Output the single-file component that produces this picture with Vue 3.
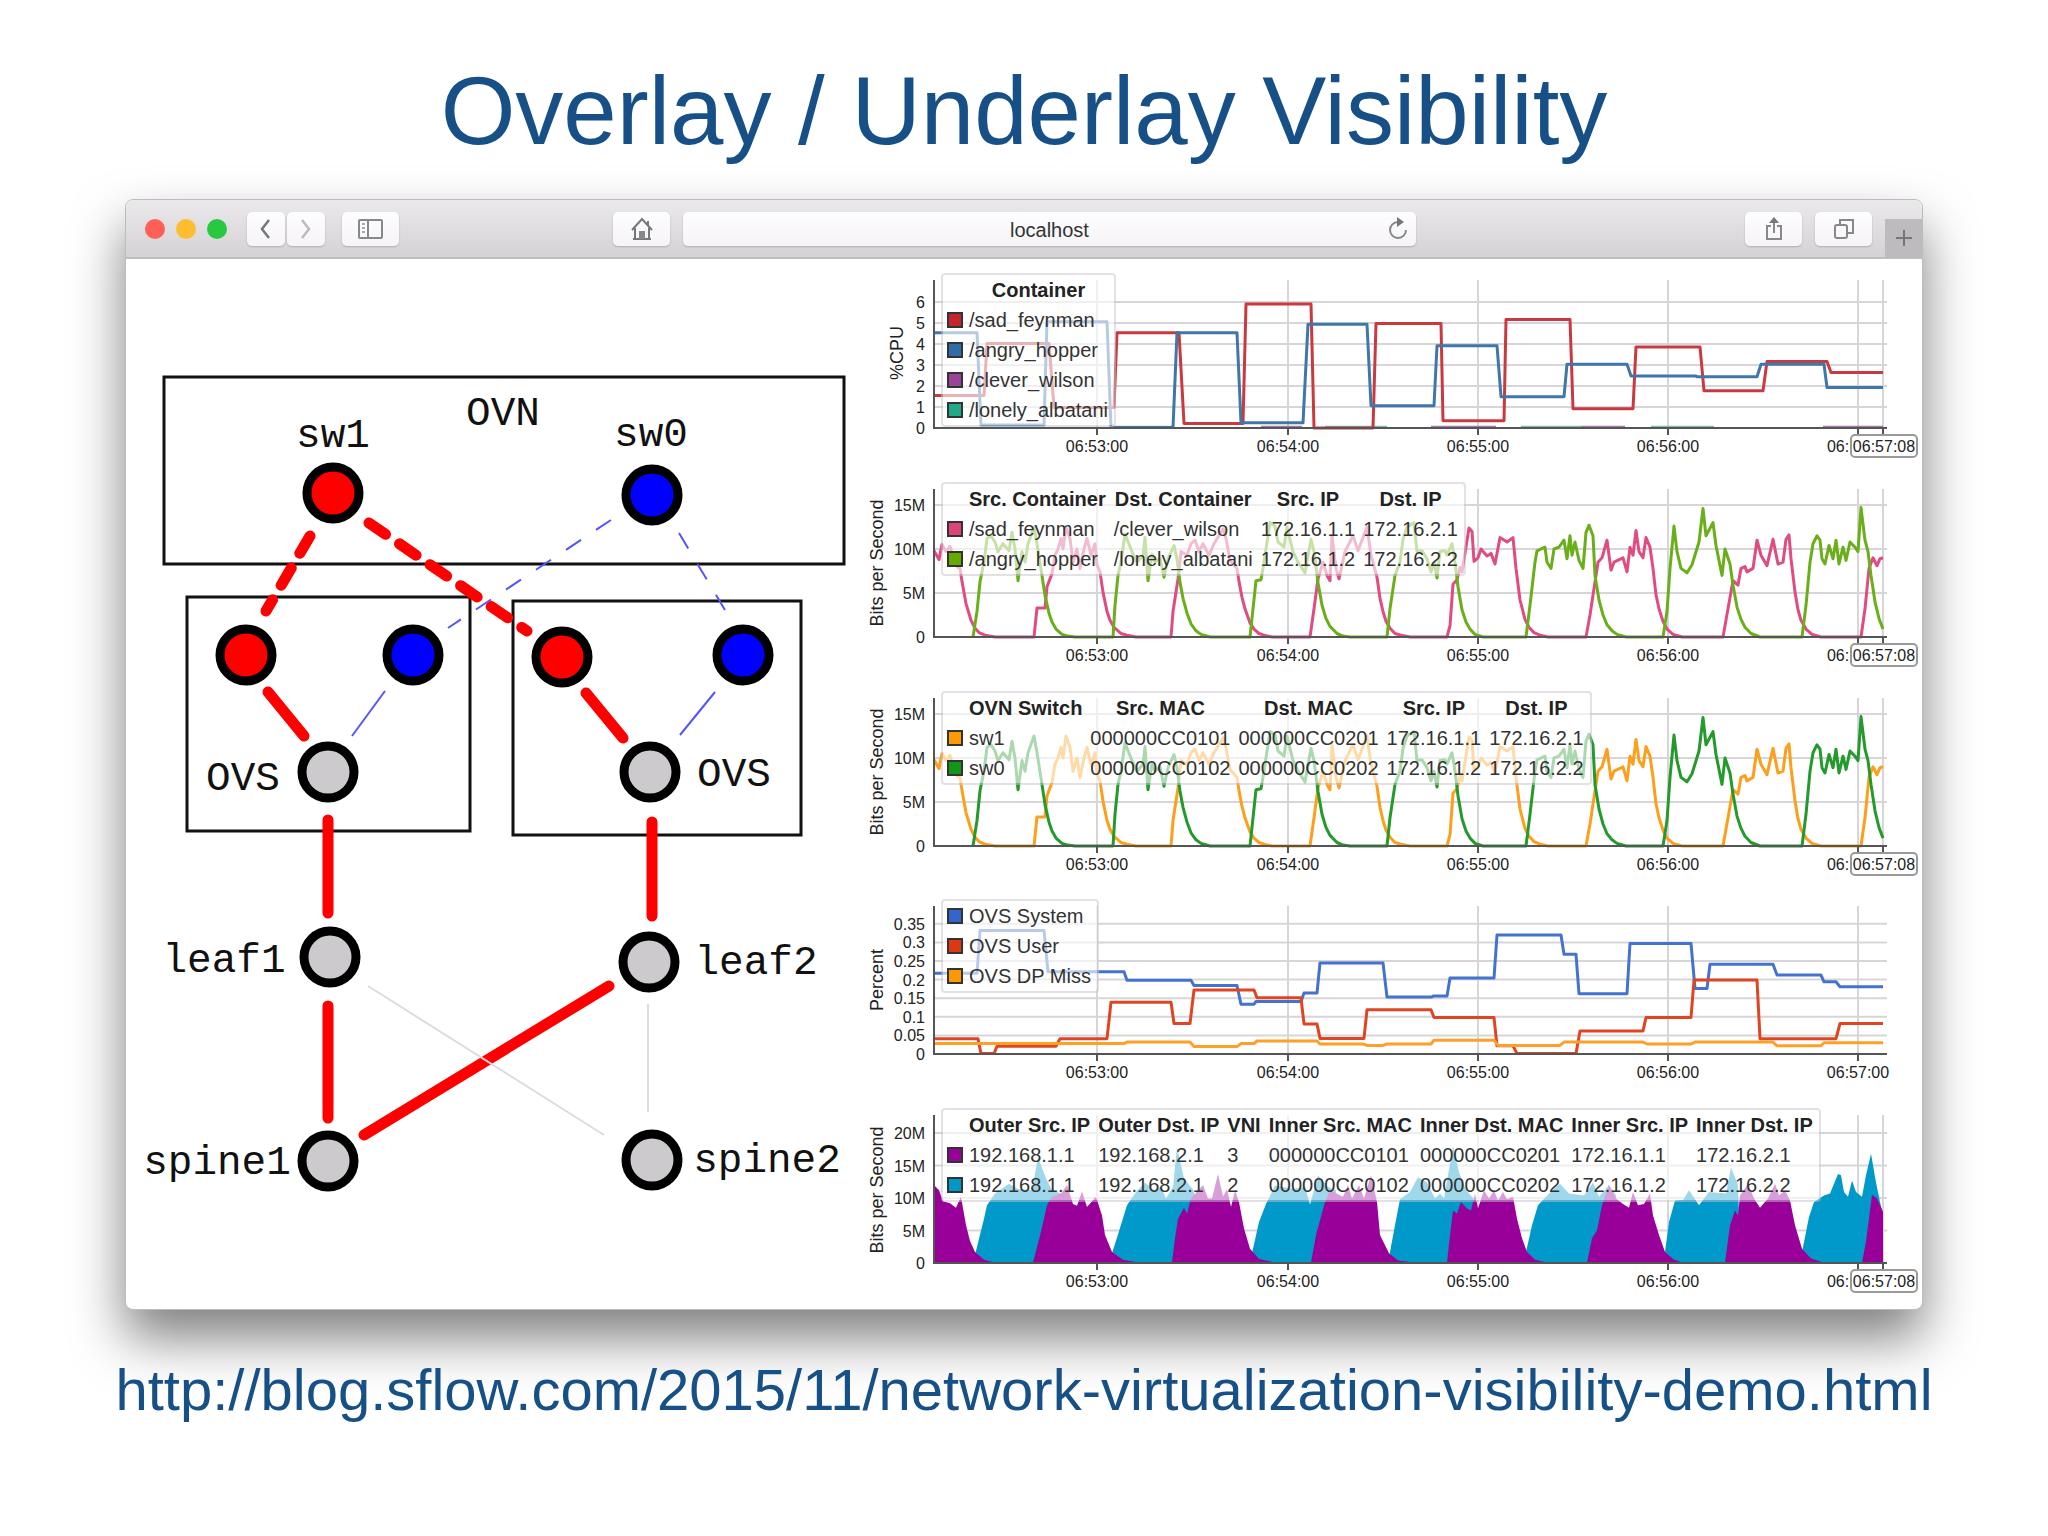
<template>
  <main class="slide">
    <h1 class="title">Overlay / Underlay Visibility</h1>

    <section class="window">
      <header class="toolbar">
        <div class="lights">
          <span class="light red"></span>
          <span class="light yellow"></span>
          <span class="light green"></span>
        </div>
        <div class="nav">
          <button class="tool narrow" type="button" aria-label="Back">
            <svg width="14" height="22" viewBox="0 0 14 22"><path d="M10 2 L3 11 L10 20" stroke="#777" stroke-width="2.5" /></svg>
          </button>
          <button class="tool narrow" type="button" aria-label="Forward">
            <svg width="14" height="22" viewBox="0 0 14 22"><path d="M3 2 L10 11 L3 20" stroke="#bbb" stroke-width="2.5" /></svg>
          </button>
        </div>
        <button class="tool" type="button" aria-label="Sidebar">
          <svg width="26" height="22" viewBox="0 0 26 22">
            <rect x="1" y="2" width="23" height="18" rx="1" stroke="#888" stroke-width="2" />
            <path d="M10 2 V20" stroke="#888" stroke-width="2" />
            <path d="M4 6 H7 M4 10 H7 M4 14 H7" stroke="#aaa" stroke-width="2" />
          </svg>
        </button>
        <div class="space-left"></div>
        <button class="tool home" type="button" aria-label="Home">
          <svg width="24" height="24" viewBox="0 0 24 24">
            <path d="M2 13 L12 2 L22 13 M18 8 V4 M5 11 V22 H19 V11 M3 22 H21" stroke="#777" stroke-width="2" />
            <rect x="9" y="14" width="6" height="8" fill="#888" />
          </svg>
        </button>
        <div class="address">
          <input type="text" value="localhost" aria-label="Address" />
          <button class="reload" type="button" aria-label="Reload">
            <svg width="22" height="24" viewBox="0 0 22 24">
              <path d="M11 5 A8 8 0 1 0 19 13" stroke="#888" stroke-width="2" />
              <path d="M10 0 L17 5 L10 10 Z" fill="#777" />
            </svg>
          </button>
        </div>
        <div class="space-right"></div>
        <button class="tool share" type="button" aria-label="Share">
          <svg width="22" height="24" viewBox="0 0 22 24">
            <path d="M8 9 H4 V22 H18 V9 H14 M11 16 V3" stroke="#888" stroke-width="2" />
            <path d="M6 6 L11 0 L16 6 Z" fill="#777" />
          </svg>
        </button>
        <button class="tool tabs" type="button" aria-label="Tabs">
          <svg width="22" height="22" viewBox="0 0 22 22">
            <rect x="2" y="7" width="12" height="13" rx="2" stroke="#888" stroke-width="2" />
            <path d="M7 7 V2 H20 V15 H15" stroke="#888" stroke-width="2" />
          </svg>
        </button>
        <button class="new-tab" type="button" aria-label="New tab">
          <svg width="20" height="20" viewBox="0 0 20 20"><path d="M10 2 V18 M2 10 H18" stroke="#777" stroke-width="2" /></svg>
        </button>
      </header>

      <div class="page">
        <svg class="topology" viewBox="0 0 734 1049">
          <g class="boxes">
            <rect x="38" y="117" width="680" height="187" />
            <rect x="61" y="337" width="283" height="234" />
            <rect x="387" y="341" width="288" height="234" />
          </g>
          <line
            v-for="(l, i) in links"
            :key="i"
            :class="l.kind"
            :x1="l.at[0]"
            :y1="l.at[1]"
            :x2="l.at[2]"
            :y2="l.at[3]"
          />
          <circle v-for="(n, i) in nodes" :key="i" :cx="n[0]" :cy="n[1]" r="26" :fill="n[2]" />
          <text v-for="(t, i) in labels" :key="i" :x="t[0]" :y="t[1]">{{ t[2] }}</text>
        </svg>

        <div class="charts">
          <figure v-for="(c, i) in charts" :key="i" class="chart">
            <svg viewBox="0 0 1062 208">
              <g class="grid">
                <line v-for="t in c.ticks.slice(1)" :key="t" x1="74" x2="1027" :y1="py(c, t)" :y2="py(c, t)" />
                <line v-for="t in times" :key="t.x" :x1="t.x" :x2="t.x" y1="16" :y2="BASE" />
                <line v-if="c.cursor" x1="1023" x2="1023" y1="16" :y2="BASE" />
              </g>
              <template v-for="(s, j) in c.series" :key="j">
                <polygon v-if="c.area" :points="areaPoints(c, s.data)" :fill="s.color" />
                <polyline v-else :points="linePoints(c, s.data)" :stroke="s.color" />
              </template>
              <path class="axis" d="M74 16 V164 H1027" />
              <path class="axis" d="M237 164 v7 M428 164 v7 M618 164 v7 M808 164 v7 M998 164 v7" />
              <path v-if="c.cursor" class="axis" d="M1023 164 v7" />
              <g class="y-labels">
                <text v-for="t in c.ticks" :key="t" x="65" :y="py(c, t) + 6">{{ t === 0 ? '0' : t + c.suffix }}</text>
              </g>
              <g class="x-labels">
                <text v-for="t in times.slice(0, 4)" :key="t.x" :x="t.x" y="188">{{ t.label }}</text>
                <text v-if="!c.cursor" :x="times[4].x" y="188">{{ times[4].label }}</text>
              </g>
              <text class="y-title" :x="-c.titleAt" :y="c.titleX" transform="rotate(-90)">{{ c.title }}</text>
              <!-- the cursor box hides the rest of the last time label -->
              <g v-if="c.cursor" class="cursor">
                <text x="978" y="188">{{ times[4].label.slice(0, 3) }}</text>
                <rect x="991" y="171" width="66" height="22" rx="4" />
                <text x="1024" y="188">06:57:08</text>
              </g>
            </svg>
            <table class="legend">
              <thead v-if="c.head">
                <tr>
                  <td></td>
                  <th v-for="h in c.head" :key="h" scope="col">{{ h }}</th>
                </tr>
              </thead>
              <tbody>
                <tr v-for="(r, k) in c.rows" :key="k">
                  <td class="key"><span class="swatch" :style="{ background: r[0] }"></span></td>
                  <td v-for="(v, m) in r.slice(1)" :key="m">{{ v }}</td>
                </tr>
              </tbody>
            </table>
          </figure>
        </div>
      </div>
    </section>

    <a class="link" href="http://blog.sflow.com/2015/11/network-virtualization-visibility-demo.html">http://blog.sflow.com/2015/11/network-virtualization-visibility-demo.html</a>
  </main>
</template>

<script setup>
const BASE = 164

const nodes = [
  [207, 233, '#ff0000'],
  [526, 235, '#0000ff'],
  [120, 395, '#ff0000'],
  [287, 395, '#0000ff'],
  [436, 397, '#ff0000'],
  [617, 395, '#0000ff'],
  [202, 512, '#cccacc'],
  [524, 512, '#cccacc'],
  [204, 697, '#cccacc'],
  [523, 702, '#cccacc'],
  [202, 901, '#cccacc'],
  [526, 900, '#cccacc']
]

const links = [
  { kind: 'hot', at: [142, 432, 178, 476] },
  { kind: 'hot', at: [460, 433, 497, 478] },
  { kind: 'hot', at: [202, 560, 202, 653] },
  { kind: 'hot', at: [526, 562, 526, 656] },
  { kind: 'hot', at: [202, 746, 202, 858] },
  { kind: 'hot', at: [238, 875, 483, 726] },
  { kind: 'hot dashed', at: [184, 276, 140, 351] },
  { kind: 'hot dashed', at: [243, 263, 401, 371] },
  { kind: 'cold dashed', at: [485, 260, 322, 368] },
  { kind: 'cold dashed', at: [553, 273, 599, 350] },
  { kind: 'cold', at: [259, 431, 226, 476] },
  { kind: 'cold', at: [589, 432, 554, 475] },
  { kind: 'idle', at: [242, 726, 478, 875] },
  { kind: 'idle', at: [522, 744, 522, 852] }
]

const labels = [
  [377, 165, 'OVN'],
  [207, 187, 'sw1'],
  [525, 186, 'sw0'],
  [117, 530, 'OVS'],
  [608, 526, 'OVS'],
  [98, 712, 'leaf1'],
  [630, 714, 'leaf2'],
  [91, 914, 'spine1'],
  [641, 912, 'spine2']
]

const times = [
  { x: 237, label: '06:53:00' },
  { x: 428, label: '06:54:00' },
  { x: 618, label: '06:55:00' },
  { x: 808, label: '06:56:00' },
  { x: 998, label: '06:57:00' }
]

// "x,value x,value ..."
const parse = (text) => text.trim().split(/\s+/).map((p) => p.split(',').map(Number))

// "from,to,value ..." - a flat run per sample
const steps = (text) => parse(text).flatMap(([a, b, v]) => [[a, v], [b, v]])

const py = (c, v) => Math.round((BASE - v * c.unit) * 10) / 10
const linePoints = (c, data) => data.map(([x, v]) => x + ',' + py(c, v)).join(' ')
const areaPoints = (c, data) =>
  data[0][0] + ',' + BASE + ' ' + linePoints(c, data) + ' ' + data[data.length - 1][0] + ',' + BASE

const flow1 = parse(`
  74,9.8 79,8.8 82,10.5 86,9.7 90,10.3 94,8.8 97,8 100,7.8 102,6.3 106,3.8 111,1.9 115,1 119,.5 125,.2 135,0
  174,0 177,3.3 185,3.3 187,5.7 192,7.2 195,9.3 198,10 201,11.2 203,10 206,12.5 210,11.2 213,8.5 217,10
  220,7.8 224,10 227,11.2 231,9.3 235,10.6 237,8.2 240,7.4 243,5.1 247,2.9 250,1.9 254,1.1 261,.4 267,.2 276,0
  311,0 313,2.9 318,6.6 321,9.7 327,9.3 331,10.6 335,11 339,9.7 343,10.6 349,9.3 354,10.6 363,12.3 366,11.2
  370,8.7 377,7.8 379,6.3 382,4.5 385,3.2 390,1.6 394,.9 399,.4 404,.2 412,0
  450,0 454,3.2 458,6.6 463,8.5 467,7 470,6.4 472,11.5 476,7.8 479,6.6 485,9.7 493,11.5 498,9.8 507,12.5
  511,9.3 517,6.8 520,4.4 523,2.9 526,1.8 530,1 535,.4 541,.2 550,0
  587,0 590,1.3 593,6 597,6.5 600,7.9 602,7.4 609,12.4 612,12 614,8.6 618,9 621,10 627,9.2 631,9.5 635,8.3
  640,11.3 647,10.8 653,11.3 656,7.8 660,4.2 665,2 669,1.1 674,.5 680,.2 688,0
  726,0 730,2.5 734,5.5 738,8.5 742,9 747,11 751,7.6 754,8.5 763,9 767,7.4 770,10.2 773,9.3 776,12.1 779,9.7
  783,9 786,11.3 790,10.2 793,7.8 796,4.8 799,3.2 803,1.8 807,.9 813,.3 822,0
  863,0 868,3.2 873,6.4 878,5.9 881,7.8 885,8 887,7.4 893,7.8 897,11 901,9.3 907,8.1 913,11.1 918,8.3
  923,8.5 926,11.1 929,11.6 931,8.9 935,5.1 938,3.1 941,1.9 946,.9 952,.3 961,0
  1001,0 1005,3.2 1009,7.8 1013,9 1017,8.1 1020,8.9 1023,9`)

const flow2 = parse(`
  113,0 117,2.9 120,6.3 124,8.5 127,11.2 131,11.5 135,10.8 138,9.7 143,10.6 149,9.8 152,11.9 155,10 158,6.4
  162,9.7 165,8.5 168,10.6 174,12.5 177,10.6 182,7 185,4.7 189,2.7 192,1.7 196,.9 202,.3 208,.1 215,0
  253,0 255,3.6 258,7 261,8.5 265,11.7 272,9.7 277,8.5 283,9.3 285,11.3 288,6.4 292,9.4 295,8.5 300,9
  304,6.8 308,8.9 314,10.4 317,8.9 320,6.2 323,4.4 327,2.7 331,1.5 336,.7 341,.3 350,0
  390,0 393,3.2 396,6.4 401,6.5 404,8.5 410,13 415,12.6 418,10.8 424,10.2 427,12.5 433,9.7 438,8.5 445,7.3
  451,11.1 454,9.7 458,6.2 462,3.6 466,2.1 470,1.2 477,.4 483,.1 490,0
  527,0 530,3.2 535,7 540,8.5 543,11.1 547,12.5 554,13 557,9.7 562,9.8 567,8.9 571,7.4 574,8.5 577,6.7
  580,9.7 585,9.8 587,9.3 592,10.6 595,8.5 598,5.7 602,3.1 606,1.7 610,.9 615,.3 623,0
  666,0 670,3.6 675,8.5 677,9.8 685,10.2 687,8.5 691,7.8 694,10 699,10.2 704,11 707,8.9 710,11.5 712,9.3
  715,10.8 719,8.7 723,7.8 726,11.9 729,12.7 733,11.5 735,7 739,4.2 743,2.5 747,1.4 752,.7 757,.3 766,0
  803,0 807,2.9 810,7.8 814,12.6 817,9.7 821,7.8 827,7.3 832,8.2 839,10.8 843,14.6 846,11.5 853,13 856,10.4
  862,7 865,10 870,8.3 873,5.9 877,3.4 881,2 885,1.1 891,.4 900,0
  942,0 946,3.6 950,8.5 953,10.6 957,11.5 960,11 962,8.9 965,8.3 969,10.4 973,8.9 976,11 979,8.3 983,10.2
  986,8.7 990,10.8 995,10.2 998,9.7 1001,14.7 1005,11 1008,9.7 1011,7 1015,4 1019,2.1 1023,.9`)

const tunnel2 = parse(`
  113,0 117,2.5 124,6.8 127,8.9 135,10.7 149,12.2 158,11.4 165,11.3 172,11.2 178,16.3 186,13 192,11.2 201,10.7 203,0
  250,0 252,1.5 258,4.4 267,8.9 276,10.9 285,12.4 294,11.2 301,11.7 306,9.9 313,11.7 317,17.8 324,13 333,11.3 338,9 340,0
  390,0 392,1.5 399,6.3 406,9.1 415,11.9 433,11.4 445,11.7 450,9 458,13.5 468,11.7 476,11.2 480,0
  528,0 530,1.7 535,5.8 540,9.8 550,10.9 558,13.2 567,12.4 575,9.9 580,10.7 584,9.9 593,18 599,14 606,11.2
  613,10 617,8 620,0
  664,0 666,1.7 672,5.8 678,8.9 689,10.7 700,12.2 709,10.7 724,10.4 733,12.4 739,10.2 749,12 756,10.4 760,0
  803,0 805,1.7 809,6.3 815,9.6 823,9.7 829,11.2 839,8.9 849,10.9 866,10.7 871,14.7 878,12 879,7.6 881,0
  940,0 942,1.7 949,7.1 954,9.4 964,10.4 970,10.7 974,12.2 978,13.7 981,13.5 984,10.9 988,10.2 992,12.7
  996,10.9 1002,10.2 1006,13.5 1011,16.8 1016,12.4 1020,9.4 1023,7.3`)

const tunnel1 = parse(`
  74,12 79,11.2 83,9.5 90,9.2 96,8.5 101,10.2 106,5.8 110,3.4 115,1.7 124,.5 133,.15
  173,.1 181,4.8 187,8.9 192,10.2 201,10.7 207,12 213,9.1 217,8.8 222,11 227,8.6 236,10.2 242,7.3 245,4.3
  252,1.7 263,.5 276,.15
  312,.1 315,3.8 318,6.8 324,8.5 327,7.6 331,9.9 343,12 348,9.9 352,9.9 358,13.7 363,10.2 367,11.4 371,8.6
  375,11.2 379,9.4 384,5.3 390,2.2 399,.6 413,.15
  451,.1 456,4.3 465,9.4 470,11.2 483,10.2 488,12 492,9.9 499,12 504,9.9 511,13.5 517,9.4 520,4.3 529,1.5
  538,.4 550,.15
  587,.1 590,4.3 593,8.1 597,7.6 601,9.4 607,8.4 611,8.1 615,10.7 618,8.4 624,11.2 629,9.9 634,11.2 638,9.6
  643,10.9 647,9.8 653,10.2 657,6.8 662,3.8 667,1.7 675,.5 685,.15
  727,.1 732,3.8 737,5 742,8.9 749,12 756,9.9 763,9.1 769,8.5 773,10.9 778,8.9 784,9.1 790,10.7 793,7.3
  799,4.3 805,1.7 814,.5 821,.15
  865,.1 870,5.8 875,8.1 878,7.3 880,10.4 888,12.2 894,9.9 900,8.5 908,9.9 915,12.2 919,10.4 925,11.2
  930,9.6 935,5.8 942,2.2 951,.7 962,.15
  1002,.1 1006,3.3 1012,10.5 1017,9.9 1023,7.9`)

const charts = [
  {
    title: '%CPU',
    titleAt: 89,
    titleX: 43,
    unit: 21,
    ticks: [0, 1, 2, 3, 4, 5, 6],
    suffix: '',
    cursor: true,
    head: ['Container'],
    rows: [
      ['#c1272d', '/sad_feynman'],
      ['#2f6da8', '/angry_hopper'],
      ['#994499', '/clever_wilson'],
      ['#22aa88', '/lonely_albatani']
    ],
    series: [
      { color: '#7fbfa6', data: steps('254,313,.04') },
      { color: '#7fbfa6', data: steps('465,527,.04') },
      { color: '#7fbfa6', data: steps('661,721,.04') },
      { color: '#7fbfa6', data: steps('791,854,.04') },
      { color: '#a47ba6', data: steps('401,442,.04') },
      { color: '#a47ba6', data: steps('571,636,.04') },
      { color: '#a47ba6', data: steps('721,765,.04') },
      { color: '#a47ba6', data: steps('963,1023,.04') },
      {
        color: '#c93a40',
        data: steps(`74,124,1.55 127,189,4.03 194,254,.98 257,319,4.54 324,383,.22 386,451,5.9 454,513,0
          516,581,4.97 583,644,.35 646,710,5.17 713,773,.92 776,840,3.86 844,903,1.77 907,967,3.16 971,1023,2.64`)
      },
      {
        color: '#3f77ab',
        data: steps(`74,117,4.54 121,184,.15 187,247,5.06 251,313,.02 317,377,4.54 381,443,.25 448,507,4.94
          511,574,1.06 577,637,3.92 641,704,1.49 707,767,3.04 771,836,2.48 837,897,2.44 901,964,3.04 967,1023,1.93`)
      }
    ]
  },
  {
    title: 'Bits per Second',
    titleAt: 90,
    titleX: 23,
    unit: 8.8,
    ticks: [0, 5, 10, 15],
    suffix: 'M',
    cursor: true,
    head: ['Src. Container', 'Dst. Container', 'Src. IP', 'Dst. IP'],
    rows: [
      ['#dd4477', '/sad_feynman', '/clever_wilson', '172.16.1.1', '172.16.2.1'],
      ['#66aa00', '/angry_hopper', '/lonely_albatani', '172.16.1.2', '172.16.2.2']
    ],
    series: [
      { color: '#e04c80', data: flow1 },
      { color: '#6aaf1a', data: flow2 }
    ]
  },
  {
    title: 'Bits per Second',
    titleAt: 90,
    titleX: 23,
    unit: 8.8,
    ticks: [0, 5, 10, 15],
    suffix: 'M',
    cursor: true,
    head: ['OVN Switch', 'Src. MAC', 'Dst. MAC', 'Src. IP', 'Dst. IP'],
    rows: [
      ['#ff9900', 'sw1', '000000CC0101', '000000CC0201', '172.16.1.1', '172.16.2.1'],
      ['#109618', 'sw0', '000000CC0102', '000000CC0202', '172.16.1.2', '172.16.2.2']
    ],
    series: [
      { color: '#fd9f1c', data: flow1 },
      { color: '#239a2b', data: flow2 }
    ]
  },
  {
    title: 'Percent',
    titleAt: 90,
    titleX: 23,
    unit: 372,
    ticks: [0, 0.05, 0.1, 0.15, 0.2, 0.25, 0.3, 0.35],
    suffix: '',
    cursor: false,
    head: null,
    rows: [
      ['#3366cc', 'OVS System'],
      ['#dc3912', 'OVS User'],
      ['#ff9900', 'OVS DP Miss']
    ],
    series: [
      {
        color: '#4472cf',
        data: steps(`74,117,.217 120,184,.332 188,264,.221 267,331,.198 334,377,.184 381,394,.134 396,441,.141
          444,457,.164 460,523,.245 527,572,.153 573,587,.156 590,634,.204 637,701,.32 704,716,.268 719,767,.162
          770,831,.297 835,847,.176 850,913,.241 917,961,.212 964,976,.194 980,1023,.181`)
      },
      {
        color: '#df4523',
        data: steps(`74,118,.041 121,134,.001 137,196,.021 200,247,.041 251,311,.139 314,330,.082 334,394,.172
          397,441,.151 444,457,.081 460,504,.042 507,571,.119 574,634,.098 637,653,.022 657,716,.001 720,783,.062
          786,831,.098 834,897,.199 900,976,.041 980,1023,.082`)
      },
      {
        color: '#fda028',
        data: steps(`74,264,.028 267,330,.032 334,377,.02 381,394,.028 397,457,.035 460,503,.027 507,523,.023
          527,571,.027 574,634,.037 638,700,.023 704,783,.032 787,831,.027 835,913,.032 917,961,.022 964,1023,.03`)
      }
    ]
  },
  {
    title: 'Bits per Second',
    titleAt: 91,
    titleX: 23,
    unit: 6.5,
    ticks: [0, 5, 10, 15, 20],
    suffix: 'M',
    cursor: true,
    area: true,
    head: ['Outer Src. IP', 'Outer Dst. IP', 'VNI', 'Inner Src. MAC', 'Inner Dst. MAC', 'Inner Src. IP', 'Inner Dst. IP'],
    rows: [
      ['#990099', '192.168.1.1', '192.168.2.1', '3', '000000CC0101', '000000CC0201', '172.16.1.1', '172.16.2.1'],
      ['#0099c6', '192.168.1.1', '192.168.2.1', '2', '000000CC0102', '000000CC0202', '172.16.1.2', '172.16.2.2']
    ],
    series: [
      { color: '#0099c9', data: tunnel2 },
      { color: '#990099', data: tunnel1 }
    ]
  }
]
</script>

<style>
body {
  margin: 0;
  background: #fff;
}
</style>

<style scoped>
.slide {
  display: flex;
  flex-direction: column;
  align-items: center;
  padding: 55px 125px 0;
  font-family: "Liberation Sans", Arial, sans-serif;
}

.title {
  margin: 0 0 32px;
  font-size: 96px;
  line-height: 112px;
  font-weight: 400;
  color: #165087;
}

.link {
  margin-top: 46px;
  font-size: 58px;
  line-height: 68px;
  color: #165087;
  text-decoration: none;
  white-space: nowrap;
}

.window {
  align-self: stretch;
  border: 1px solid #bdbbbe;
  border-radius: 8px;
  background: #fff;
  box-shadow: 0 28px 52px rgba(0, 0, 0, 0.5);
  overflow: hidden;
}

.toolbar {
  display: flex;
  align-items: center;
  height: 57px;
  padding-left: 19px;
  border-bottom: 2px solid #bfbdc0;
  background: linear-gradient(#ebe9ec, #d4d2d5);
}

.lights {
  display: flex;
  gap: 11px;
  margin-right: 20px;
}

.light {
  width: 20px;
  height: 20px;
  border-radius: 50%;
}

.light.red {
  background: #fe5f57;
}

.light.yellow {
  background: #fdbd2e;
}

.light.green {
  background: #28c840;
}

.nav {
  display: flex;
  gap: 2px;
  margin-right: 17px;
}

.toolbar svg {
  fill: none;
}

button {
  display: flex;
  align-items: center;
  justify-content: center;
  padding: 0;
  border: 0;
}

.tool {
  width: 57px;
  height: 34px;
  border-radius: 5px;
  background: linear-gradient(#fdfcfe, #f6f4f7);
  box-shadow: 0 1px 2px rgba(0, 0, 0, 0.2);
}

.tool.narrow {
  width: 38px;
}

.home {
  margin-right: 13px;
}

.share {
  margin-right: 13px;
}

.tabs {
  margin-right: 13px;
}

.space-left {
  flex: 214;
}

.space-right {
  flex: 329;
}

.address {
  display: flex;
  flex: 732;
  height: 34px;
  border-radius: 5px;
  background: linear-gradient(#fdfcfe, #f6f4f7);
  box-shadow: 0 1px 2px rgba(0, 0, 0, 0.2);
}

.address input {
  flex: 1;
  min-width: 0;
  padding: 3px 0 0 36px;
  border: 0;
  background: none;
  font: 20px "Liberation Sans", Arial, sans-serif;
  color: #333;
  text-align: center;
}

.reload {
  width: 36px;
  background: none;
}

.new-tab {
  align-self: flex-end;
  width: 37px;
  height: 38px;
  background: #bdbbbe;
}

.page {
  display: grid;
  grid-template-columns: 734fr 1062fr;
  padding-top: 1px;
}

.topology {
  display: block;
  width: 100%;
}

.boxes rect {
  fill: none;
  stroke: #111;
  stroke-width: 3;
}

.topology circle {
  stroke: #000;
  stroke-width: 9;
}

.topology text {
  font-family: "Liberation Mono", "Courier New", monospace;
  font-size: 41px;
  text-anchor: middle;
  fill: #111;
}

.hot {
  stroke: #ff0000;
  stroke-width: 11;
  stroke-linecap: round;
}

.hot.dashed {
  stroke-dasharray: 20 17;
}

.cold {
  stroke: #5555ff;
  stroke-width: 2;
}

.cold.dashed {
  stroke-dasharray: 18 18;
}

.idle {
  stroke: #dddbe0;
  stroke-width: 2;
}

.charts {
  display: flex;
  flex-direction: column;
  justify-content: space-between;
  padding: 4px 0 2px;
}

.chart {
  position: relative;
  margin: 0;
}

.chart svg {
  display: block;
  width: 100%;
}

.grid line {
  stroke: #d8d5da;
  stroke-width: 2;
}

.chart polyline {
  fill: none;
  stroke-width: 3;
  stroke-linejoin: round;
}

.axis {
  fill: none;
  stroke: #555;
  stroke-width: 2;
}

.chart text {
  font-size: 16px;
  fill: #222;
}

.y-labels text {
  text-anchor: end;
}

.x-labels text,
.cursor text {
  text-anchor: middle;
}

.chart .y-title {
  font-size: 18px;
  text-anchor: middle;
}

.cursor rect {
  fill: #fff;
  stroke: #999;
  stroke-width: 2;
}

.legend {
  position: absolute;
  top: 9px;
  left: 81px;
  border: 2px solid rgba(200, 195, 205, 0.5);
  border-radius: 4px;
  border-collapse: separate;
  border-spacing: 0;
  background: rgba(255, 255, 255, 0.62);
  background-clip: padding-box;
  font-size: 20px;
  line-height: 30px;
  color: #333;
  white-space: nowrap;
}

.legend th,
.legend td {
  height: 30px;
  padding: 0 6px 0 2px;
  text-align: left;
}

.legend th {
  text-align: center;
  color: #222;
}

.legend td.key {
  padding: 0 4px;
}

.swatch {
  display: block;
  box-sizing: border-box;
  width: 16px;
  height: 16px;
  border: 2px solid #333;
}
</style>
